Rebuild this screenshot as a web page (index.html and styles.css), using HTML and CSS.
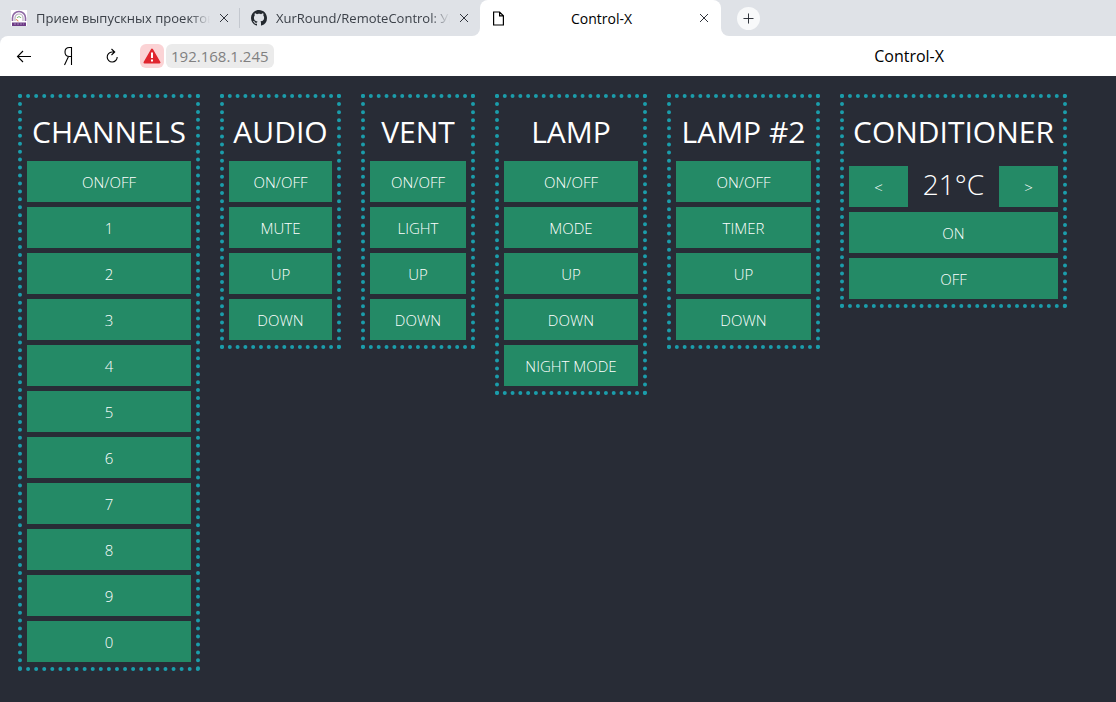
FILE: index.html
```html
<!DOCTYPE html>
<html lang="en">
<head>
<meta charset="utf-8">
<title>Control-X</title>
<link rel="stylesheet" href="styles.css">
</head>
<body>
<header class="browser">
  <div class="tabs">
    <div class="tab tab-first">
      <svg class="favicon" viewBox="0 0 16 16" aria-hidden="true">
        <path fill="#fff" d="M0 0h16v16H0z"/>
        <path fill="none" stroke="#8d68a3" stroke-width="1.600" d="M1.500 11V8a6.500 6.500 0 0 1 13 0v3"/>
        <path fill="none" stroke="#b9b0c0" stroke-width="1.200" d="M4 11V8a4 4 0 0 1 8 0v3"/>
        <path fill="none" stroke="#78b56b" d="M6 8a2.200 2.200 0 0 1 4 0"/>
        <path fill="none" stroke="#e58b4c" d="M5.500 9a2 2 0 0 0 2 2"/>
        <path fill="#6d3b86" d="M1 12.500h14V16H1z"/>
        <path stroke="#a98aba" stroke-dasharray="2 1" d="M3 14h10"/>
      </svg>
      <span class="tab-title">Прием выпускных проектов</span>
      <button class="close" aria-label="Close tab"><svg viewBox="0 0 10 10"><path d="M1 1l8 8M9 1L1 9"/></svg></button>
    </div>
    <div class="tab tab-second">
      <svg class="favicon" viewBox="0 0 16 16" aria-hidden="true"><path fill="#24292f" d="M8 0C3.58 0 0 3.58 0 8c0 3.54 2.29 6.53 5.47 7.59.4.07.55-.17.55-.38 0-.19-.01-.82-.01-1.49-2.01.37-2.53-.49-2.69-.94-.09-.23-.48-.94-.82-1.13-.28-.15-.68-.52-.01-.53.63-.01 1.08.58 1.23.82.72 1.21 1.87.87 2.33.66.07-.52.28-.87.51-1.07-1.78-.2-3.64-.89-3.64-3.95 0-.87.31-1.59.82-2.15-.08-.2-.36-1.02.08-2.12 0 0 .67-.21 2.2.82.64-.18 1.32-.27 2-.27s1.36.09 2 .27c1.53-1.04 2.2-.82 2.2-.82.44 1.1.16 1.92.08 2.12.51.56.82 1.27.82 2.15 0 3.07-1.87 3.75-3.65 3.95.29.25.54.73.54 1.48 0 1.07-.01 1.93-.01 2.2 0 .21.15.46.55.38A8.01 8.01 0 0 0 16 8c0-4.42-3.58-8-8-8z"/></svg>
      <span class="tab-title">XurRound/RemoteControl: Ун</span>
      <button class="close" aria-label="Close tab"><svg viewBox="0 0 10 10"><path d="M1 1l8 8M9 1L1 9"/></svg></button>
    </div>
    <div class="tab tab-active">
      <svg class="page-icon" viewBox="0 0 11 15" aria-hidden="true"><path d="M.6 1h6L10.400 4.800V14H.6zM6.600 1v3.800h3.800"/></svg>
      <span class="tab-title">Control-X</span>
      <button class="close" aria-label="Close tab"><svg viewBox="0 0 10 10"><path d="M1 1l8 8M9 1L1 9"/></svg></button>
    </div>
    <button class="new-tab" aria-label="New tab"><svg viewBox="0 0 12 12"><path d="M6 .5v11M.5 6h11"/></svg></button>
  </div>
  <div class="toolbar">
    <button class="tool" aria-label="Back"><svg viewBox="0 0 20 20"><path d="M17 10.500H3.500M9 5l-5.500 5.500L9 16"/></svg></button>
    <button class="tool" aria-label="Home"><svg viewBox="0 0 20 20"><path d="M13.500 19V1.500h-2C8.500 1.500 7 3.500 7 6s1.500 4.500 4.500 4.500h2M10.500 10.500l-4 8.500"/></svg></button>
    <button class="tool" aria-label="Reload"><svg viewBox="0 0 20 20"><path d="M12.500 6H10a5 5 0 1 0 5.200 5M9.500 3l3.200 3-3.200 3"/></svg></button>
    <div class="address">
      <button class="warning" aria-label="Not secure"><svg viewBox="0 0 18 16"><path fill="#e0252e" stroke="#e0252e" stroke-width="2" stroke-linejoin="round" d="M9 1.500L16.500 14.500h-15z"/><path fill="#fff" d="M8 4.500h2V10H8zM8 11.500h2v2H8z"/></svg></button>
      <a class="host" href="#">192.168.1.245</a>
    </div>
    <span class="page-title">Control-X</span>
  </div>
</header>
<main class="board">
  <section class="panel channels">
    <h1>CHANNELS</h1>
    <button>ON/OFF</button><button>1</button><button>2</button><button>3</button><button>4</button><button>5</button><button>6</button><button>7</button><button>8</button><button>9</button><button>0</button>
  </section>
  <section class="panel audio">
    <h1>AUDIO</h1>
    <button>ON/OFF</button><button>MUTE</button><button>UP</button><button>DOWN</button>
  </section>
  <section class="panel vent">
    <h1>VENT</h1>
    <button>ON/OFF</button><button>LIGHT</button><button>UP</button><button>DOWN</button>
  </section>
  <section class="panel lamp">
    <h1>LAMP</h1>
    <button>ON/OFF</button><button>MODE</button><button>UP</button><button>DOWN</button><button>NIGHT MODE</button>
  </section>
  <section class="panel lamp-two">
    <h1>LAMP #2</h1>
    <button>ON/OFF</button><button>TIMER</button><button>UP</button><button>DOWN</button>
  </section>
  <section class="panel conditioner">
    <h1>CONDITIONER</h1>
    <div class="temperature">
      <button aria-label="Cooler">&lt;</button><output>21°C</output><button aria-label="Warmer">&gt;</button>
    </div>
    <button>ON</button><button>OFF</button>
  </section>
</main>
</body>
</html>
```
FILE: styles.css
```css
* { box-sizing: border-box; }
body {
  margin: 0;
  min-height: 100vh;
  background: #282c36;
  color: #fff;
  font-family: "Open Sans", "Noto Sans", sans-serif;
}
button {
  border: 0;
  padding: 0;
  background: none;
  font: inherit;
  color: inherit;
}
svg { display: block; flex: none; }

.browser { background: #dfe2e7; color: #000; font-size: 14px; }
.tabs { display: flex; height: 36px; background: #fff; }
.tab {
  display: flex;
  align-items: center;
  gap: 9px;
  flex: 0 1 240px;
  min-width: 0;
  padding: 0 11px;
  background: #dfe2e7;
  color: #3b4048;
  font-size: 13px;
}
.tab-first { background: linear-gradient(#c4c8cf, #c4c8cf) right center / 1px 20px no-repeat #dfe2e7; }
.tab-second { border-bottom-right-radius: 8px; }
.tab-active {
  flex-basis: 241px;
  padding: 0 12px 0 13px;
  background: linear-gradient(#dfe2e7, #dfe2e7) top / 100% 8px no-repeat;
  color: #000;
  font-size: 14px;
  position: relative;
  z-index: 0;
}
.tab-active::before {
  content: "";
  position: absolute;
  inset: 0;
  z-index: -1;
  border-radius: 8px 8px 0 0;
  background: #fff;
}
.favicon { width: 16px; height: 16px; }
.page-icon { width: 11px; height: 15px; fill: none; stroke: #000; stroke-width: 1.2; }
.tab-title {
  flex: 1;
  min-width: 0;
  overflow: hidden;
  white-space: nowrap;
  mask-image: linear-gradient(to left, transparent, #000 20px);
}
.tab-active .tab-title { text-align: center; mask-image: none; }
.close svg { width: 10px; height: 10px; fill: none; stroke: #30343c; }
.new-tab {
  flex: 1;
  padding: 6px 16px;
  background: #dfe2e7;
  border-bottom-left-radius: 8px;
}
.new-tab svg {
  width: 23px;
  height: 23px;
  padding: 6px;
  border-radius: 50%;
  background: #f8f9fa;
  fill: none;
  stroke: #20242c;
}
.toolbar {
  display: grid;
  grid-template-columns: 20px 20px 20px 1fr auto 148px;
  column-gap: 24px;
  align-items: center;
  height: 40px;
  padding-left: 14px;
  background: #fff;
  border-top-left-radius: 8px;
  font-size: 15px;
}
.page-title { font-size: 16px; }
.tool svg { width: 20px; height: 20px; fill: none; stroke: #000; stroke-width: 1.1; }
.address { display: flex; gap: 2px; margin-left: -6px; }
.warning { padding: 4px 3px; border-radius: 6px; background: #fbd3d5; }
.warning svg { width: 18px; height: 16px; }
.host {
  padding: 0 5px;
  border-radius: 6px;
  background: #ebebeb;
  color: #808080;
  line-height: 24px;
  text-decoration: none;
}

.board {
  display: flex;
  align-items: flex-start;
  gap: 20px;
  padding: 18px;
}
.panel {
  display: flex;
  flex-direction: column;
  gap: 5px;
  padding: 5px;
  border: 4px dotted #1b9dab;
  font-size: 15px;
  font-weight: 300;
}
.panel h1 {
  margin: 0;
  padding-top: 5px;
  font-size: 30px;
  font-weight: 400;
  line-height: 48px;
  text-align: center;
  white-space: nowrap;
}
.panel button {
  min-height: 41px;
  background: #248a66;
  color: #fff;
  white-space: nowrap;
}
.channels { min-width: 182px; }
.audio { min-width: 121px; }
.vent { min-width: 114px; }
.lamp { min-width: 152px; }
.lamp-two { min-width: 153px; }
.conditioner { min-width: 227px; }
.temperature {
  display: grid;
  grid-template-columns: 59px 1fr 59px;
  padding-top: 5px;
}
.temperature output { font-size: 28px; line-height: 36px; text-align: center; }
```
